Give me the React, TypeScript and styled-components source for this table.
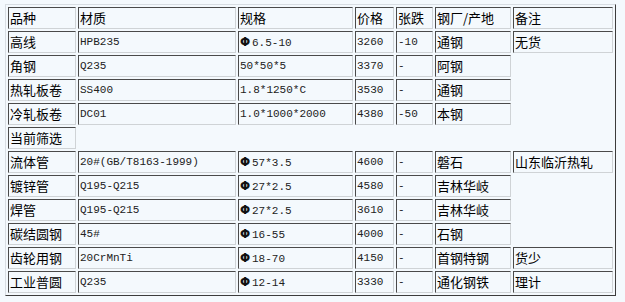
import React from "react";
import styled, { createGlobalStyle } from "styled-components";

const GlobalStyle = createGlobalStyle`
  html, body {
    margin: 0;
    padding: 0;
    background: #f4f9fd;
  }
`;

const Page = styled.div`
  padding: 4px 0 0 5px;
  background: #f4f9fd;
  min-height: 302px;
  box-sizing: border-box;
`;

const PriceTable = styled.table`
  table-layout: fixed;
  width: 611px;
  border-collapse: separate;
  border-spacing: 2px;
  empty-cells: hide;
  border-style: solid;
  border-width: 1px;
  border-color: #d8dde2 #3c3c3c #3c3c3c #d8dde2;
`;

const Col = styled.col<{ $w: number }>`
  width: ${({ $w }) => $w}px;
`;

const Cell = styled.td<{ $latin?: boolean }>`
  box-sizing: border-box;
  height: 22px;
  padding: 0 1px;
  border-style: solid;
  border-width: 1px;
  border-color: #4a4a4a #cfd3d6 #cfd3d6 #4a4a4a;
  white-space: nowrap;
  overflow: hidden;
  vertical-align: middle;
  line-height: 18px;
  font-family: ${({ $latin }) =>
    $latin
      ? '"Liberation Mono", "Noto Sans CJK SC", monospace'
      : '"Noto Sans CJK SC", sans-serif'};
  font-size: ${({ $latin }) => ($latin ? "11px" : "13px")};
  color: ${({ $latin }) => ($latin ? "#222" : "#000")};
`;

const Phi = styled.span`
  display: inline-block;
  width: 12px;
  font-family: "DejaVu Sans", sans-serif;
  font-weight: bold;
  font-size: 12px;
  color: #111;
`;

type Row = {
  name: string;
  grade: string;
  spec: string;
  phi?: boolean;
  price: string;
  change: string;
  mill: string;
  note: string;
};

const cols = [68, 158, 115, 39, 37, 76, 100];
const heads = ["品种", "材质", "规格", "价格", "张跌", "钢厂/产地", "备注"];

const top: Row[] = [
  { name: "高线", grade: "HPB235", spec: "6.5-10", phi: true, price: "3260", change: "-10", mill: "通钢", note: "无货" },
  { name: "角钢", grade: "Q235", spec: "50*50*5", price: "3370", change: "-", mill: "阿钢", note: "" },
  { name: "热轧板卷", grade: "SS400", spec: "1.8*1250*C", price: "3530", change: "-", mill: "通钢", note: "" },
  { name: "冷轧板卷", grade: "DC01", spec: "1.0*1000*2000", price: "4380", change: "-50", mill: "本钢", note: "" },
];

const filtered: Row[] = [
  { name: "流体管", grade: "20#(GB/T8163-1999)", spec: "57*3.5", phi: true, price: "4600", change: "-", mill: "磐石", note: "山东临沂热轧" },
  { name: "镀锌管", grade: "Q195-Q215", spec: "27*2.5", phi: true, price: "4580", change: "-", mill: "吉林华岐", note: "" },
  { name: "焊管", grade: "Q195-Q215", spec: "27*2.5", phi: true, price: "3610", change: "-", mill: "吉林华岐", note: "" },
  { name: "碳结圆钢", grade: "45#", spec: "16-55", phi: true, price: "4000", change: "-", mill: "石钢", note: "" },
  { name: "齿轮用钢", grade: "20CrMnTi", spec: "18-70", phi: true, price: "4150", change: "-", mill: "首钢特钢", note: "货少" },
  { name: "工业普圆", grade: "Q235", spec: "12-14", phi: true, price: "3330", change: "-", mill: "通化钢铁", note: "理计" },
];

const DataRow: React.FC<{ row: Row }> = ({ row }) => (
  <tr>
    <Cell>{row.name}</Cell>
    <Cell $latin>{row.grade}</Cell>
    <Cell $latin>
      {row.phi && <Phi>Φ</Phi>}
      {row.spec}
    </Cell>
    <Cell $latin>{row.price}</Cell>
    <Cell $latin>{row.change}</Cell>
    <Cell>{row.mill}</Cell>
    <Cell>{row.note}</Cell>
  </tr>
);

export default function App() {
  return (
    <Page>
      <GlobalStyle />
      <PriceTable>
        <colgroup>
          {cols.map((w, i) => (
            <Col key={i} $w={w} />
          ))}
        </colgroup>
        <tbody>
          <tr>
            {heads.map((h) => (
              <Cell key={h}>{h}</Cell>
            ))}
          </tr>
          {top.map((r, i) => (
            <DataRow key={i} row={r} />
          ))}
          <tr>
            <Cell>当前筛选</Cell>
          </tr>
          {filtered.map((r, i) => (
            <DataRow key={i} row={r} />
          ))}
        </tbody>
      </PriceTable>
    </Page>
  );
}
